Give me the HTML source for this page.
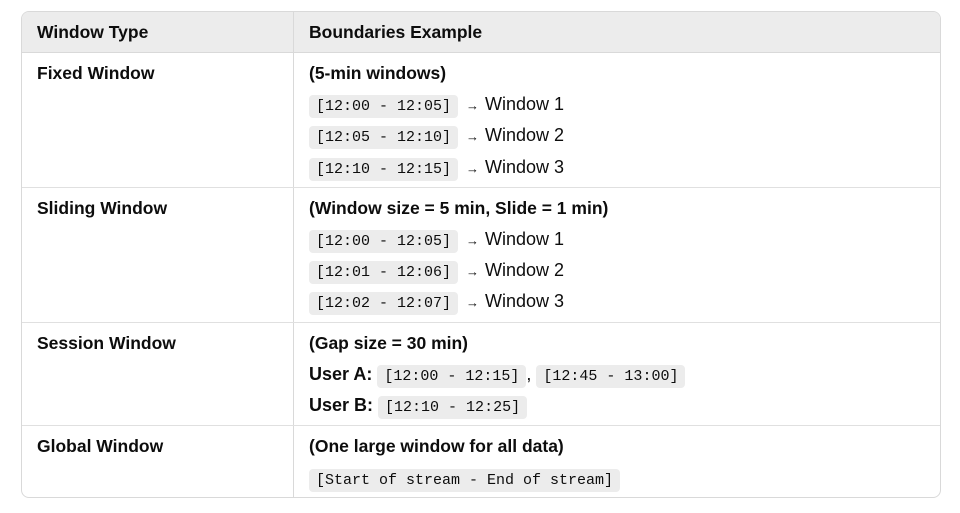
<!DOCTYPE html>
<html><head><style>
body{margin:0;background:#fff;width:960px;height:513px;position:relative;font-family:"Liberation Sans",sans-serif;color:#0d0d0d;overflow:hidden}
.tbl{position:absolute;left:21px;top:11px;width:918px;height:485px;border:1px solid #d9d9d9;border-radius:8px;overflow:hidden}
.hdr{position:absolute;left:0;top:0;width:100%;height:40px;background:#ececec;border-bottom:1px solid #d9d9d9}
.vl{position:absolute;left:271px;top:0;width:1px;height:100%;background:#d9d9d9}
.hl{position:absolute;left:0;width:100%;height:1px;background:#e0e0e0}
.t{position:absolute;font-size:18px;white-space:nowrap;line-height:20px}
.b{font-weight:bold;font-size:17.5px}
code{font-family:"Liberation Mono",monospace;font-size:15px;background:#ececec;border-radius:4px;padding:3px 7px}
.ar{font-size:13px;margin:0 6px 0 8px}
</style></head><body>
<div class="tbl">
<div class="hdr"></div>
<div class="vl"></div>
<div class="hl" style="top:175px"></div>
<div class="hl" style="top:310px"></div>
<div class="hl" style="top:413px"></div>
</div>
<div class="t b" style="left:37px;top:22px">Window Type</div>
<div class="t b" style="left:309px;top:22px">Boundaries Example</div>

<div class="t b" style="left:37px;top:63px">Fixed Window</div>
<div class="t b" style="left:309px;top:63px">(5-min windows)</div>
<div class="t" style="left:309px;top:94px"><code>[12:00 - 12:05]</code><span class="ar">→</span>Window 1</div>
<div class="t" style="left:309px;top:125px"><code>[12:05 - 12:10]</code><span class="ar">→</span>Window 2</div>
<div class="t" style="left:309px;top:157px"><code>[12:10 - 12:15]</code><span class="ar">→</span>Window 3</div>

<div class="t b" style="left:37px;top:198px">Sliding Window</div>
<div class="t b" style="left:309px;top:198px">(Window size = 5 min, Slide = 1 min)</div>
<div class="t" style="left:309px;top:229px"><code>[12:00 - 12:05]</code><span class="ar">→</span>Window 1</div>
<div class="t" style="left:309px;top:260px"><code>[12:01 - 12:06]</code><span class="ar">→</span>Window 2</div>
<div class="t" style="left:309px;top:291px"><code>[12:02 - 12:07]</code><span class="ar">→</span>Window 3</div>

<div class="t b" style="left:37px;top:333px">Session Window</div>
<div class="t b" style="left:309px;top:333px">(Gap size = 30 min)</div>
<div class="t" style="left:309px;top:364px"><b>User A:</b> <code>[12:00 - 12:15]</code>, <code>[12:45 - 13:00]</code></div>
<div class="t" style="left:309px;top:395px"><b>User B:</b> <code>[12:10 - 12:25]</code></div>

<div class="t b" style="left:37px;top:436px">Global Window</div>
<div class="t b" style="left:309px;top:436px">(One large window for all data)</div>
<div class="t" style="left:309px;top:468px"><code>[Start of stream - End of stream]</code></div>
</body></html>
